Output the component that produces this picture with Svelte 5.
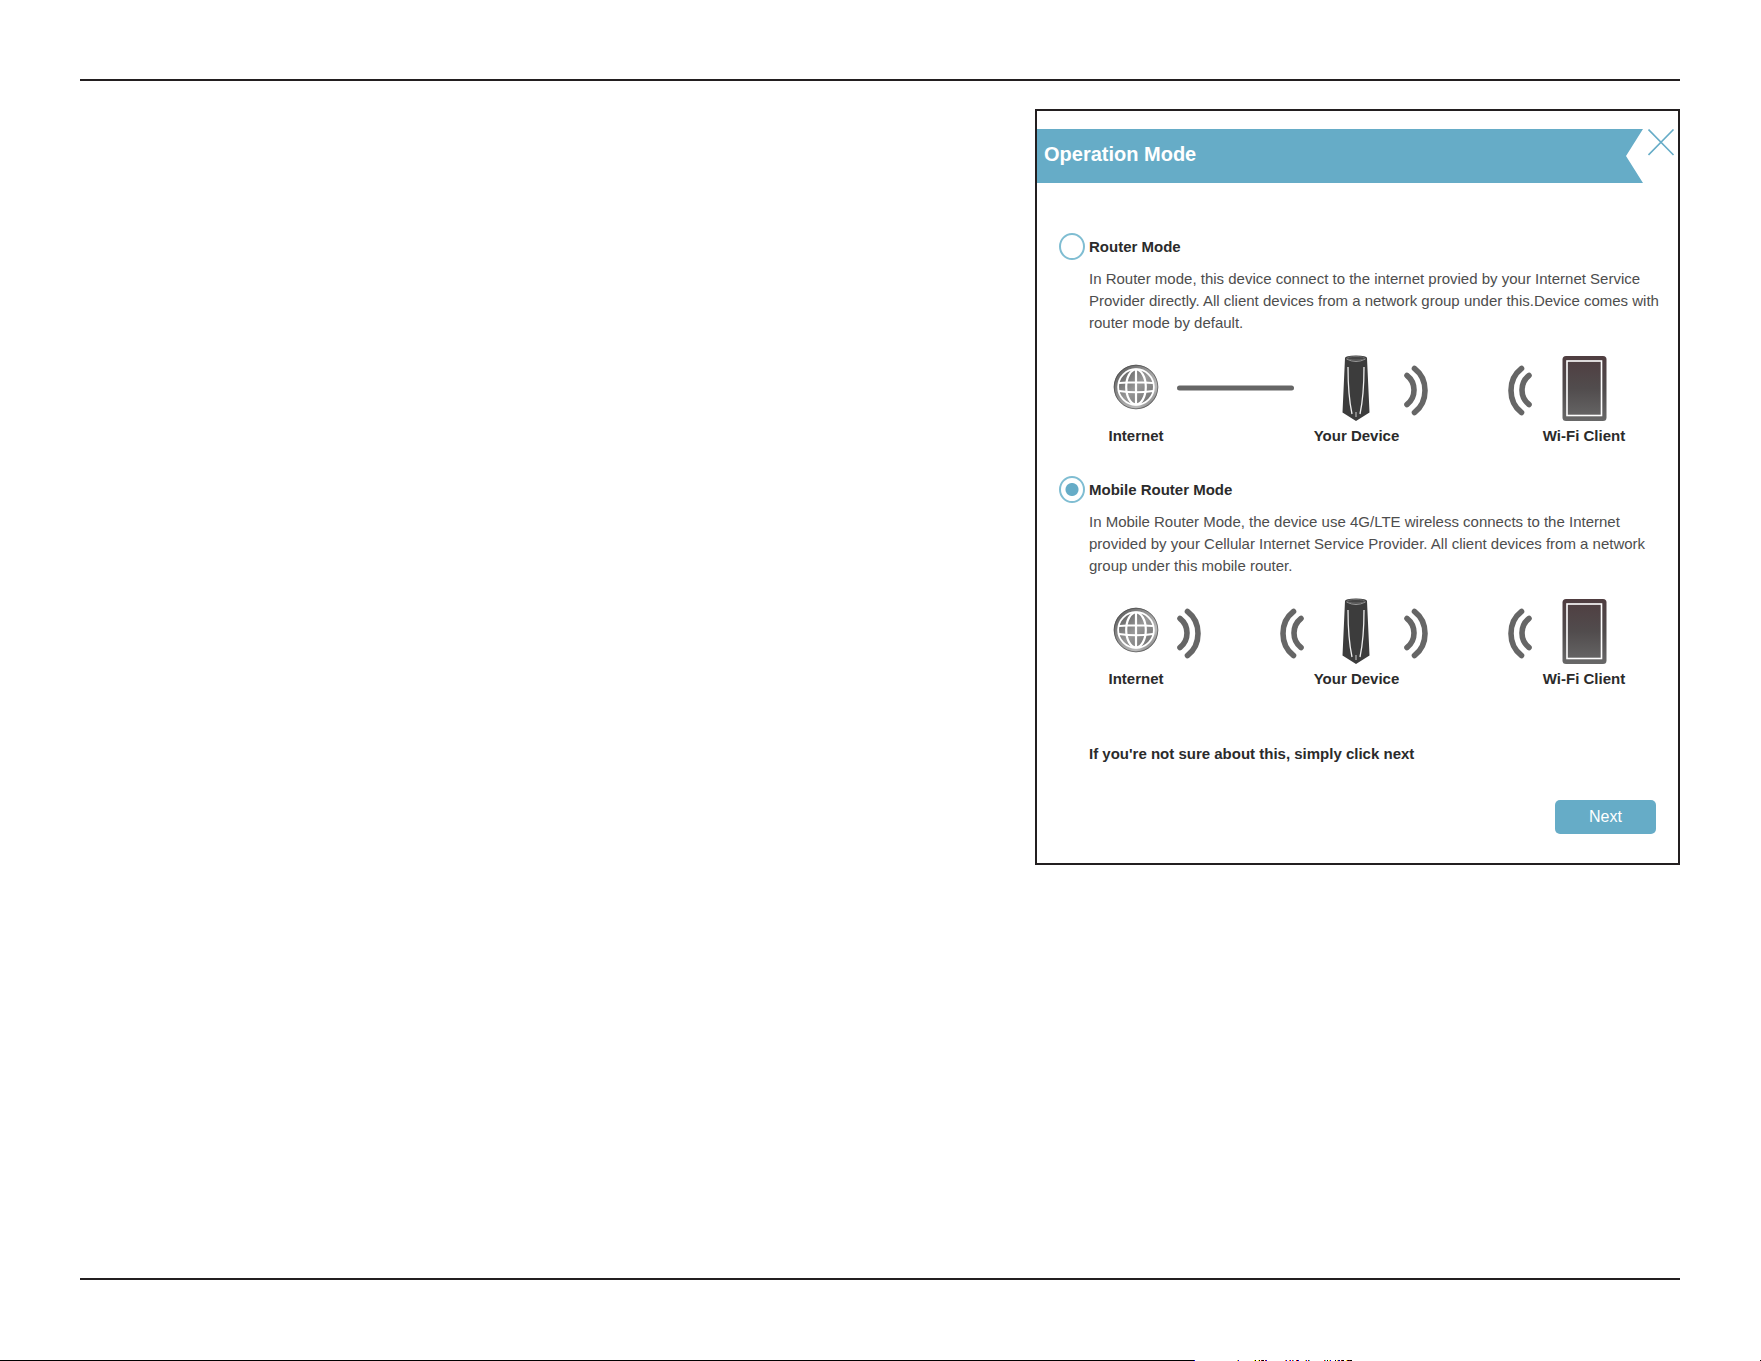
<script>
  let mode = $state('mobile');

  const modes = [
    {
      id: 'router',
      title: 'Router Mode',
      text: 'In Router mode, this device connect to the internet provied by your Internet Service Provider directly. All client devices from a network group under this.Device comes with router mode by default.',
      wired: true
    },
    {
      id: 'mobile',
      title: 'Mobile Router Mode',
      text: 'In Mobile Router Mode, the device use 4G/LTE wireless connects to the Internet provided by your Cellular Internet Service Provider. All client devices from a network group under this mobile router.',
      wired: false
    }
  ];

  // Specks of the clipped footer line: [x, width, colour]
  const specks = [
    [1194, 1, '#00f'], [1237, 1, '#fd0'], [1238, 1, '#00f'], [1254, 1, '#ff0'], [1255, 1, '#000'],
    [1258, 1, '#ff0'], [1259, 1, '#000'], [1261, 1, '#a00'], [1262, 2, '#000'], [1265, 1, '#a00'],
    [1266, 1, '#00f'], [1285, 1, '#f80'], [1286, 1, '#00f'], [1289, 1, '#f80'], [1290, 1, '#00f'],
    [1292, 1, '#f00'], [1293, 1, '#0dd'], [1296, 1, '#f00'], [1297, 1, '#000'], [1298, 1, '#00f'],
    [1305, 1, '#fd0'], [1306, 1, '#00f'], [1308, 1, '#a00'], [1309, 1, '#0dd'], [1324, 1, '#f00'],
    [1325, 1, '#0dd'], [1327, 1, '#000'], [1329, 1, '#ff0'], [1330, 1, '#00f'], [1335, 1, '#000'],
    [1337, 1, '#fd0'], [1338, 2, '#009'], [1341, 1, '#a00'], [1342, 2, '#000'], [1346, 1, '#ff0'],
    [1347, 1, '#600'], [1348, 1, '#000'], [1349, 1, '#600'], [1350, 2, '#000'], [1760, 1, '#000']
  ];
</script>

{#snippet wavesRight()}
  <svg class="waves" viewBox="0 0 24 67" aria-hidden="true">
    <path d="M3 20.500Q10 26 10 35T3 49.500M10.500 13.500Q21 21.500 21 35.500T10.500 57.500" />
  </svg>
{/snippet}

{#snippet wavesLeft()}
  <svg class="waves" viewBox="0 0 24 67" aria-hidden="true">
    <path d="M21 20.500Q14 26 14 35T21 49.500M13.500 13.500Q3 21.500 3 35.500T13.500 57.500" />
  </svg>
{/snippet}

<div class="page">
  <main>
    <section class="dialog" aria-labelledby="dialog-title">
      <header>
        <h1 id="dialog-title">Operation Mode</h1>
        <button class="close" type="button" aria-label="Close">
          <svg viewBox="0 0 27 27" aria-hidden="true"><path d="M.5 .5L25.500 26M25.500 .5L.5 26" /></svg>
        </button>
      </header>

      <form onsubmit={(e) => e.preventDefault()}>
        {#each modes as m (m.id)}
          <div class="mode">
            <input type="radio" id={m.id} name="mode" value={m.id} bind:group={mode} />
            <label for={m.id}>{m.title}</label>
            <p class="text">{m.text}</p>
            <div class="diagram">
              <figure>
                <svg viewBox="0 0 48 67" aria-hidden="true">
                  <defs>
                    <linearGradient id="rim-{m.id}" x1="0" y1="0" x2="1" y2="1">
                      <stop offset="0" stop-color="#555" />
                      <stop offset=".45" stop-color="#999" />
                      <stop offset=".75" stop-color="#bbb" />
                      <stop offset="1" stop-color="#666" />
                    </linearGradient>
                    <linearGradient id="sea-{m.id}" x1="0" y1="0" x2="1" y2="1">
                      <stop offset="0" stop-color="#5a5a5a" />
                      <stop offset=".5" stop-color="#989898" />
                      <stop offset="1" stop-color="#6c6c6c" />
                    </linearGradient>
                  </defs>
                  <circle cx="24" cy="32" r="20.500" fill="#fff" stroke="url(#rim-{m.id})" stroke-width="3.500" />
                  <circle cx="24" cy="32" r="21.800" fill="none" stroke="#444" stroke-width="1" opacity=".6" />
                  <circle cx="24" cy="32" r="17" fill="url(#sea-{m.id})" />
                  <g fill="none" stroke="#fff" stroke-width="2.200">
                    <path d="M24 14V50M7 28Q24 26.500 41 28M7 36Q24 38.500 41 36" />
                    <ellipse cx="24" cy="32" rx="9.800" ry="17.500" />
                  </g>
                </svg>
                <figcaption>Internet</figcaption>
              </figure>

              <div class="link first">
                {#if m.wired}
                  <svg class="wire" viewBox="0 0 118 67" aria-hidden="true"><path d="M2.500 33H114.500" /></svg>
                {:else}
                  {@render wavesRight()}
                  {@render wavesLeft()}
                {/if}
              </div>

              <figure>
                <svg viewBox="0 0 28 67" aria-hidden="true">
                  <path d="M3 3Q3 .5 14 .5T25 3L27.500 57.500L14 66L.5 57.500Z" fill="#3c3c3c" />
                  <path d="M4.500 4Q14 9 23.500 4" fill="none" stroke="#999" />
                  <ellipse cx="14" cy="3.300" rx="9" ry="1.800" fill="#444" stroke="#777" stroke-width=".8" />
                  <path d="M6 12C6 30 7 45 10 59M22 12C22 30 21 45 18 59" fill="none" stroke="#eee" stroke-width="1.300" />
                  <path d="M14 57V62" stroke="#ccc" stroke-width="1" />
                </svg>
                <figcaption>Your Device</figcaption>
              </figure>

              <div class="link second">
                {@render wavesRight()}
                {@render wavesLeft()}
              </div>

              <figure>
                <svg viewBox="0 0 45 67" aria-hidden="true">
                  <defs>
                    <linearGradient id="glass-{m.id}" x1="0" y1="0" x2="0" y2="1">
                      <stop offset="0" stop-color="#4f3d40" />
                      <stop offset=".5" stop-color="#514c4d" />
                      <stop offset="1" stop-color="#686868" />
                    </linearGradient>
                  </defs>
                  <rect x=".5" y="1" width="44" height="65" rx="3.500" fill="url(#glass-{m.id})" />
                  <rect x="5" y="6" width="34.500" height="54.500" fill="none" stroke="#fff" stroke-width="1.600" />
                </svg>
                <figcaption>Wi-Fi Client</figcaption>
              </figure>
            </div>
          </div>
        {/each}

        <p class="note">If you're not sure about this, simply click next</p>
        <button class="next" type="submit">Next</button>
      </form>
    </section>
  </main>

  <svg class="edge" aria-hidden="true">
    <rect width="1194" height="1" fill="#000" />
    {#each specks as [x, width, colour]}
      <rect {x} {width} height="1" fill={colour} />
    {/each}
  </svg>
</div>

<style>
  :global(body) {
    margin: 0;
    background: #fff;
  }

  .page {
    box-sizing: border-box;
    display: flex;
    flex-direction: column;
    min-height: 100vh;
    padding: 79px 0 0;
    font-family: 'Liberation Sans', Arial, sans-serif;
    font-size: 15px;
    line-height: 22px;
    color: #2b2b2b;
  }

  main {
    flex: 1;
    display: flex;
    justify-content: flex-end;
    align-items: flex-start;
    margin: 0 81px 80px 80px;
    padding: 28px 0;
    border: solid #231f20;
    border-width: 2px 0;
  }

  .dialog {
    box-sizing: border-box;
    width: 100%;
    max-width: 645px;
    padding: 18px 0 29px;
    border: 2px solid #231f20;
  }

  header {
    display: flex;
    align-items: flex-start;
    gap: 5px;
    padding-right: 3px;
  }

  h1 {
    flex: 1;
    box-sizing: border-box;
    height: 54px;
    margin: 0;
    padding: 13px 7px;
    background: #66acc7;
    clip-path: polygon(0 0, 100% 0, calc(100% - 17px) 50%, 100% 100%, 0 100%);
    color: #fff;
    font-size: 20px;
    line-height: 24px;
  }

  button {
    border: 0;
    font-family: inherit;
    cursor: pointer;
  }

  .close {
    width: 27px;
    height: 27px;
    padding: 0;
    background: none;
  }

  svg {
    display: block;
  }

  .close path {
    fill: none;
    stroke: #66acc7;
    stroke-width: 1.6;
  }

  form {
    display: flex;
    flex-direction: column;
    padding: 50px 12px 0 22px;
  }

  .mode {
    display: grid;
    grid-template-columns: 26px 1fr;
    column-gap: 4px;
    margin-bottom: 29px;
  }

  input {
    appearance: none;
    box-sizing: border-box;
    width: 26px;
    height: 27px;
    margin: 0;
    border: 2px solid #7fbdd2;
    border-radius: 50%;
    background: #fff;
  }

  input:checked {
    background: radial-gradient(circle, #66acc7 6px, #fff 7px);
  }

  label,
  figcaption,
  .note {
    font-weight: bold;
  }

  label {
    align-self: center;
    padding-top: 1px;
  }

  .text {
    grid-column: 2;
    margin: 8px 0 21px;
    color: #4d4d4d;
  }

  .diagram {
    grid-column: 2;
    display: grid;
    grid-template-columns: 54px 151fr 86px 144fr 82px;
    align-items: start;
    padding: 0 41px 0 20px;
  }

  figure {
    display: flex;
    flex-direction: column;
    align-items: center;
    gap: 3px;
    margin: 0;
    white-space: nowrap;
  }

  figure svg {
    height: 67px;
  }

  .link {
    display: flex;
    justify-content: space-between;
  }

  .first {
    padding: 0 9px 0 14px;
  }

  .second {
    padding: 0 11px 0 5px;
  }

  .waves,
  .wire {
    height: 67px;
    fill: none;
    stroke: #666;
    stroke-width: 5;
    stroke-linecap: round;
  }

  .waves {
    width: 24px;
    stroke-width: 5.6;
  }

  .wire {
    width: 118px;
  }

  .note {
    margin: 24px 30px 35px;
  }

  .next {
    align-self: flex-end;
    width: 101px;
    height: 34px;
    margin-right: 10px;
    padding: 0;
    border-radius: 5px;
    background: #66acc7;
    color: #fff;
    font-size: 16px;
  }

  .edge {
    width: 100%;
    height: 1px;
    shape-rendering: crispEdges;
  }
</style>
